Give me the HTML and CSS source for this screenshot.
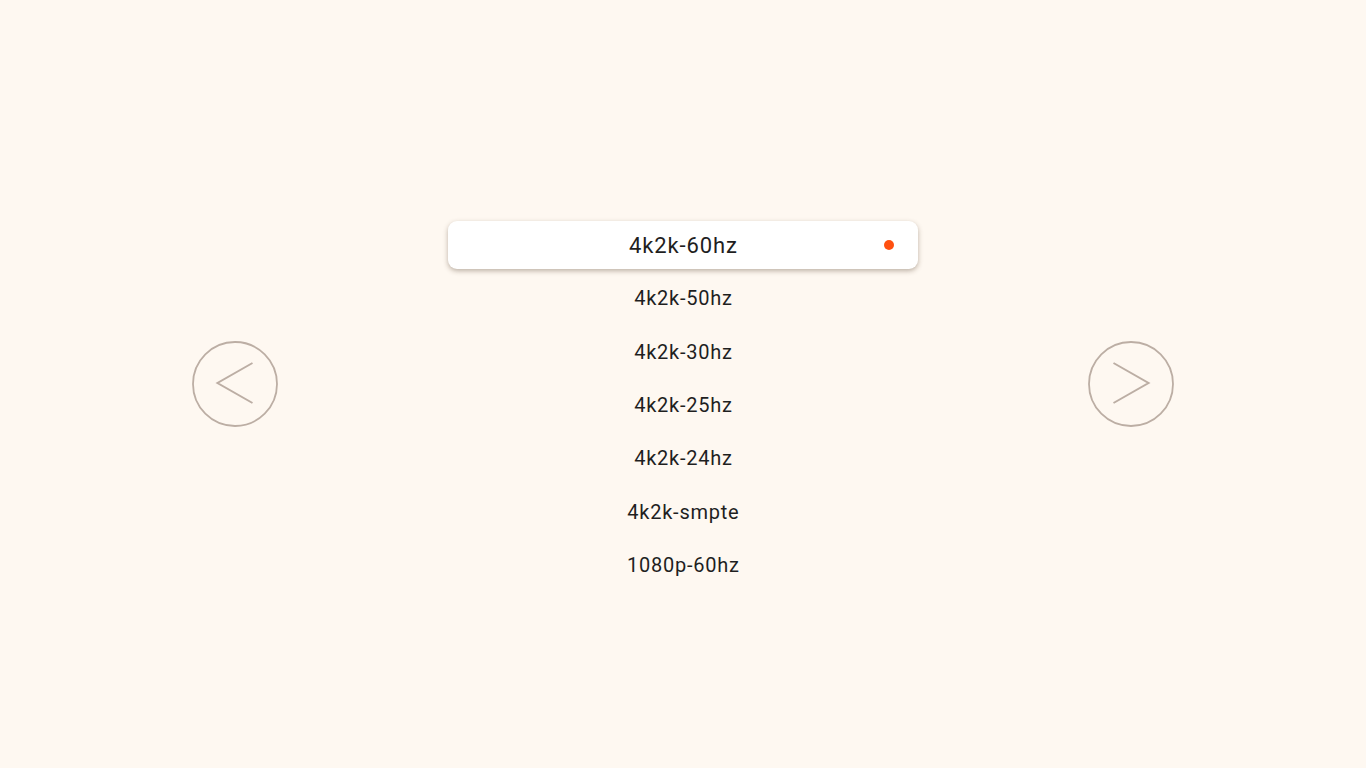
FILE: index.html
```html
<!DOCTYPE html>
<html lang="en">
<head>
<meta charset="utf-8">
<title>Resolution</title>
<link rel="stylesheet" href="styles.css">
</head>
<body>
<main class="screen">
  <button class="nav nav-prev" aria-label="Previous">
    <svg viewBox="0 0 86 86" width="86" height="86">
      <circle cx="43" cy="43" r="42" fill="none" stroke="#bcaea4" stroke-width="1.8"/>
      <polyline points="60.5,22 25.5,42 60.5,62" fill="none" stroke="#bcaea4" stroke-width="2"/>
    </svg>
  </button>
  <ul class="list">
    <li class="item selected"><span>4k2k-60hz</span><i class="dot"></i></li>
    <li class="item"><span>4k2k-50hz</span></li>
    <li class="item"><span>4k2k-30hz</span></li>
    <li class="item"><span>4k2k-25hz</span></li>
    <li class="item"><span>4k2k-24hz</span></li>
    <li class="item"><span>4k2k-smpte</span></li>
    <li class="item"><span>1080p-60hz</span></li>
  </ul>
  <button class="nav nav-next" aria-label="Next">
    <svg viewBox="0 0 86 86" width="86" height="86">
      <circle cx="43" cy="43" r="42" fill="none" stroke="#bcaea4" stroke-width="1.8"/>
      <polyline points="25.5,22 60.5,42 25.5,62" fill="none" stroke="#bcaea4" stroke-width="2"/>
    </svg>
  </button>
</main>
</body>
</html>
```

FILE: styles.css
```css
html, body {
  margin: 0;
  padding: 0;
  background: #fef8f1;
}
body {
  font-family: Roboto, "Liberation Sans", sans-serif;
  color: #1f1f1f;
}
.screen {
  height: 768px;
  display: flex;
  align-items: center;
  justify-content: center;
  gap: 170px;
}
.nav {
  width: 86px;
  height: 86px;
  padding: 0;
  margin: 0;
  border: 0;
  background: transparent;
  display: block;
}
.nav svg {
  display: block;
}
.list {
  list-style: none;
  margin: 42px 0 0 0;
  padding: 0;
  width: 470px;
}
.item {
  height: 53.33px;
  display: flex;
  align-items: center;
  justify-content: center;
  font-size: 20px;
  letter-spacing: 0.75px;
  position: relative;
}
.item span {
  margin-right: -0.75px;
}
.item.selected {
  height: 48px;
  margin: 2.67px 0;
  background: #ffffff;
  border-radius: 9px;
  box-shadow: 0 2px 5px rgba(90, 70, 50, 0.4);
  font-size: 22px;
  letter-spacing: 0.9px;
}
.dot {
  position: absolute;
  right: 24px;
  top: 50%;
  width: 10px;
  height: 10px;
  margin-top: -5px;
  border-radius: 50%;
  background: #ff5010;
}
```
